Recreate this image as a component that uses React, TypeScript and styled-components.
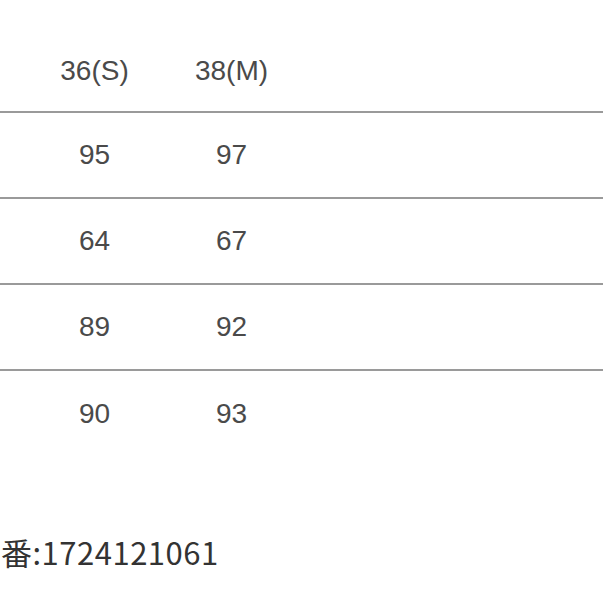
import React from "react";
import styled, { createGlobalStyle } from "styled-components";

const GlobalStyle = createGlobalStyle`
  html, body {
    margin: 0;
    padding: 0;
    background: #ffffff;
  }
`;

const sizes = ["36(S)", "38(M)"];
const rows = [
  ["95", "97"],
  ["64", "67"],
  ["89", "92"],
  ["90", "93"],
];

const App = () => (
  <>
    <GlobalStyle />
    <Page>
      <Table>
        <HeadRow>
          <Spacer />
          {sizes.map((s) => (
            <Cell key={s}>{s}</Cell>
          ))}
        </HeadRow>
        {rows.map((r, i) => (
          <Row key={i}>
            <Spacer />
            {r.map((v, j) => (
              <Cell key={j}>{v}</Cell>
            ))}
          </Row>
        ))}
      </Table>
      <Code>番:1724121061</Code>
    </Page>
  </>
);

export default App;

const Page = styled.div`
  width: 603px;
  height: 603px;
  overflow: hidden;
  background: #fff;
`;

const Table = styled.div`
  display: flex;
  flex-direction: column;
`;

const HeadRow = styled.div`
  display: grid;
  grid-template-columns: 26px 137px 137px 1fr;
  align-items: center;
  height: 113px;
  padding-top: 30px;
  box-sizing: border-box;
  border-bottom: 2px solid #9a9a9a;
`;

const Row = styled.div`
  display: grid;
  grid-template-columns: 26px 137px 137px 1fr;
  align-items: center;
  height: 86px;
  box-sizing: border-box;
  border-bottom: 2px solid #9a9a9a;
  &:last-child {
    border-bottom: none;
  }
`;

const Spacer = styled.div``;

const Cell = styled.div`
  text-align: center;
  font-family: "Liberation Sans", Arial, sans-serif;
  font-size: 28px;
  color: #4a4a4a;
  line-height: 1;
`;

const Code = styled.div`
  margin-top: 79px;
  padding-left: 1px;
  font-family: "Noto Sans CJK JP", "Noto Sans", sans-serif;
  font-size: 31px;
  letter-spacing: 0.5px;
  color: #333;
  line-height: 1;
`;
